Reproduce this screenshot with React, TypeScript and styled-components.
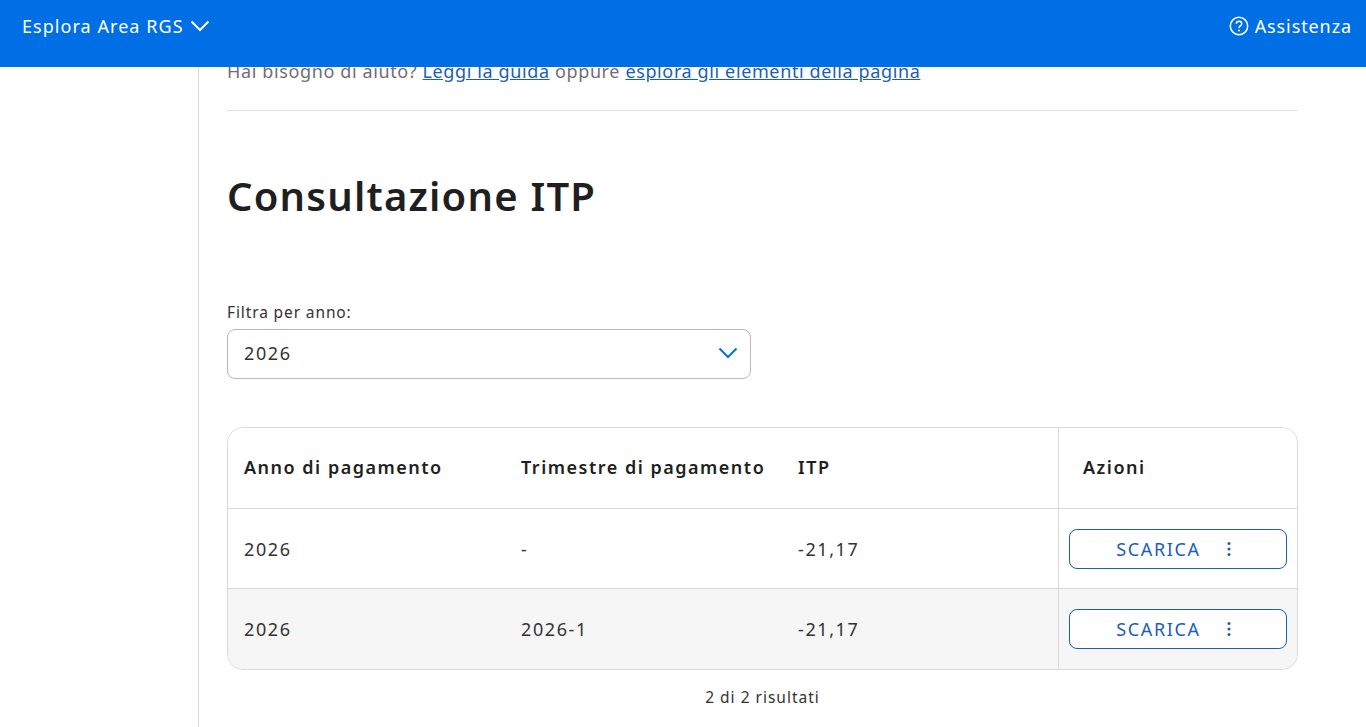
import React from "react";
import styled, { createGlobalStyle } from "styled-components";

const Global = createGlobalStyle`
  html, body { margin: 0; padding: 0; height: 727px; overflow: hidden; background: #fff; }
  body { font-family: "Noto Sans", "Lato", sans-serif; color: #1f1f1f; }
  * { box-sizing: border-box; }
`;

const Header = styled.header`
  position: fixed;
  top: 0; left: 0; right: 0;
  height: 67px;
  background: #006fe6;
  color: #fff;
  display: flex;
  justify-content: space-between;
  align-items: flex-start;
  padding: 15px 14px 0 22px;
  font-size: 18px;
  line-height: 22px;
  z-index: 2;
`;
const HeaderItem = styled.div<{ $gap: number; $spacing: number }>`
  display: flex;
  align-items: center;
  gap: ${(p) => p.$gap}px;
  letter-spacing: ${(p) => p.$spacing}px;
`;
const Page = styled.div`
  display: grid;
  grid-template-columns: 199px 1fr;
  height: 727px;
`;
const Side = styled.aside`
  border-right: 1px solid #d9d9d9;
`;
const Main = styled.main`
  padding: 60px 68px 0 28px;
`;
const Help = styled.p`
  margin: 0;
  height: 51px;
  border-bottom: 1px solid #e0e0e0;
  font-size: 18px;
  line-height: 22px;
  letter-spacing: 0.62px;
  color: #6f6f6f;
`;
const HelpLink = styled.a`
  color: #1a5fb4;
  text-decoration: underline;
`;
const Title = styled.h1`
  margin: 59px 0 0;
  font-size: 40px;
  line-height: 52px;
  font-weight: 600;
  letter-spacing: 1.2px;
  color: #1f1f1f;
`;
const FilterLabel = styled.label`
  display: block;
  margin-top: 80px;
  font-size: 15.5px;
  line-height: 20px;
  letter-spacing: 0.88px;
  color: #333;
`;
const Select = styled.div`
  margin-top: 7px;
  width: 524px;
  height: 50px;
  border: 1px solid #b8b8b8;
  border-radius: 8px;
  display: flex;
  align-items: center;
  justify-content: space-between;
  padding: 0 12px 2px 16px;
  font-size: 18px;
  letter-spacing: 1.6px;
  color: #333;
`;
const TableWrap = styled.div`
  margin-top: 48px;
  border: 1px solid #d9d9d9;
  border-radius: 16px;
  overflow: hidden;
  box-shadow: 0 -1px 0 #e4e4e4 inset;
`;
const Row = styled.div<{ $head?: boolean; $alt?: boolean }>`
  display: grid;
  grid-template-columns: 277px 277px 276px 1fr;
  height: ${(p) => (p.$head ? 81 : 80)}px;
  padding-bottom: ${(p) => (p.$head ? 2 : 0)}px;
  align-items: center;
  background: ${(p) => (p.$alt ? "#f6f6f6" : "#fff")};
  border-bottom: ${(p) => (p.$alt ? "none" : "1px solid #d9d9d9")};
  font-size: 18px;
  letter-spacing: ${(p) => (p.$head ? 1.5 : 1.6)}px;
  font-weight: ${(p) => (p.$head ? 600 : 400)};
  color: ${(p) => (p.$head ? "#1f1f1f" : "#333")};
`;
const Cell = styled.div`
  padding-left: 16px;
  white-space: nowrap;
`;
const ActionCell = styled.div<{ $head?: boolean }>`
  height: calc(100% + ${(p) => (p.$head ? 2 : 0)}px);
  margin-bottom: ${(p) => (p.$head ? -2 : 0)}px;
  border-left: 1px solid #d9d9d9;
  display: flex;
  align-items: center;
  padding-left: ${(p) => (p.$head ? 24 : 10)}px;
  padding-bottom: ${(p) => (p.$head ? 2 : 0)}px;
`;
const Button = styled.button`
  width: 218px;
  height: 40px;
  border: 1px solid #1a5fb4;
  border-radius: 8px;
  background: #fff;
  color: #1a5fb4;
  font-family: inherit;
  font-size: 18px;
  letter-spacing: 1.65px;
  display: flex;
  align-items: center;
  justify-content: center;
  gap: 26px;
  padding: 0 9px 0 0;
`;
const Results = styled.div`
  margin-top: 17px;
  text-align: center;
  font-size: 15.5px;
  line-height: 20px;
  letter-spacing: 1px;
  color: #333;
`;

const Chevron = ({ color, w, h, sw }: { color: string; w: number; h: number; sw: number }) => (
  <svg width={w} height={h} viewBox="0 0 20 12" fill="none" stroke={color} strokeWidth={sw}>
    <path d="M1.5 1.5 10 10l8.500-8.500" />
  </svg>
);
const Question = () => (
  <svg width="20" height="20" viewBox="0 0 20 20" fill="none" stroke="#fff" strokeWidth="1.5">
    <circle cx="10" cy="10" r="8.700" />
    <path d="M7.300 7.800c0-1.500 1.200-2.500 2.700-2.500s2.700 1 2.700 2.400c0 2.200-2.700 2.200-2.700 4.300" />
    <circle cx="10" cy="14.600" r="1" fill="#fff" stroke="none" />
  </svg>
);
const Dots = () => (
  <svg width="4" height="16" viewBox="0 0 4 16" fill="#1a5fb4">
    <circle cx="2" cy="2.500" r="1.500" />
    <circle cx="2" cy="8" r="1.500" />
    <circle cx="2" cy="13.500" r="1.500" />
  </svg>
);

const rows = [
  { y: "2026", t: "-", v: "-21,17", alt: false },
  { y: "2026", t: "2026-1", v: "-21,17", alt: true },
];

export default function App() {
  return (
    <>
      <Global />
      <Header>
        <HeaderItem $gap={6} $spacing={1.05}>
          Esplora Area RGS <Chevron color="#fff" w={20} h={12} sw={2} />
        </HeaderItem>
        <HeaderItem $gap={6} $spacing={0.9}>
          <Question /> Assistenza
        </HeaderItem>
      </Header>
      <Page>
        <Side />
        <Main>
          <Help>
            Hai bisogno di aiuto? <HelpLink>Leggi la guida</HelpLink> oppure{" "}
            <HelpLink>esplora gli elementi della pagina</HelpLink>
          </Help>
          <Title>Consultazione ITP</Title>
          <FilterLabel>Filtra per anno:</FilterLabel>
          <Select>
            2026 <Chevron color="#0073e6" w={20} h={12} sw={2} />
          </Select>
          <TableWrap>
            <Row $head>
              <Cell>Anno di pagamento</Cell>
              <Cell>Trimestre di pagamento</Cell>
              <Cell>ITP</Cell>
              <ActionCell $head>Azioni</ActionCell>
            </Row>
            {rows.map((r) => (
              <Row key={r.t} $alt={r.alt}>
                <Cell>{r.y}</Cell>
                <Cell>{r.t}</Cell>
                <Cell>{r.v}</Cell>
                <ActionCell>
                  <Button>
                    SCARICA <Dots />
                  </Button>
                </ActionCell>
              </Row>
            ))}
          </TableWrap>
          <Results>2 di 2 risultati</Results>
        </Main>
      </Page>
    </>
  );
}
